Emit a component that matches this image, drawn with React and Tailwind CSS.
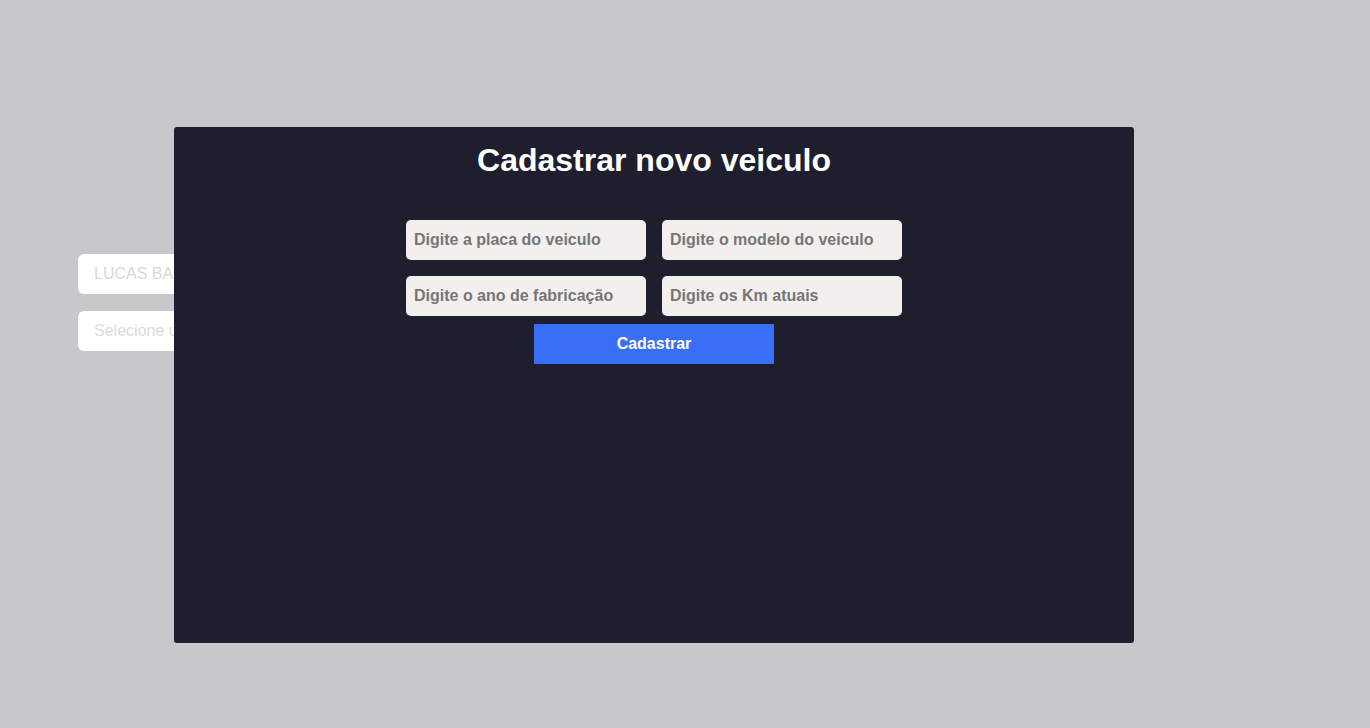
export default function App() {
  const font = { fontFamily: '"Liberation Sans", Arial, sans-serif' };
  return (
    <div className="relative w-[1370px] h-[728px] bg-[#c8c7cc] overflow-hidden" style={font}>
      <div className="flex flex-col gap-[17px] pt-[254px] pl-[78px]">
        <input
          className="w-[300px] h-10 rounded-md bg-white px-4 text-base text-[#d9d9d9] placeholder:text-[#dcdcdc] outline-none"
          defaultValue="LUCAS BARBOSA"
        />
        <input
          className="w-[300px] h-10 rounded-md bg-white px-4 text-base placeholder:text-[#dcdcdc] outline-none"
          placeholder="Selecione um veiculo"
        />
      </div>
      <div className="absolute left-[174px] top-[127px] w-[960px] h-[516px] rounded-[3px] bg-[#1e1e2e] flex flex-col items-center">
        <h1 className="mt-[15px] text-[32px] font-bold text-white leading-[37px]">Cadastrar novo veiculo</h1>
        <div className="mt-[41px] grid grid-cols-[240px_240px] gap-4">
          <input className="h-10 rounded-[5px] bg-[#f2efee] px-2 text-base font-bold placeholder:text-[#767676] outline-none" placeholder="Digite a placa do veiculo" />
          <input className="h-10 rounded-[5px] bg-[#f2efee] px-2 text-base font-bold placeholder:text-[#767676] outline-none" placeholder="Digite o modelo do veiculo" />
          <input className="h-10 rounded-[5px] bg-[#f2efee] px-2 text-base font-bold placeholder:text-[#767676] outline-none" placeholder="Digite o ano de fabricação" />
          <input className="h-10 rounded-[5px] bg-[#f2efee] px-2 text-base font-bold placeholder:text-[#767676] outline-none" placeholder="Digite os Km atuais" />
        </div>
        <button className="mt-2 w-[240px] h-10 bg-[#3a6ef6] text-white text-base font-bold">Cadastrar</button>
      </div>
    </div>
  );
}
